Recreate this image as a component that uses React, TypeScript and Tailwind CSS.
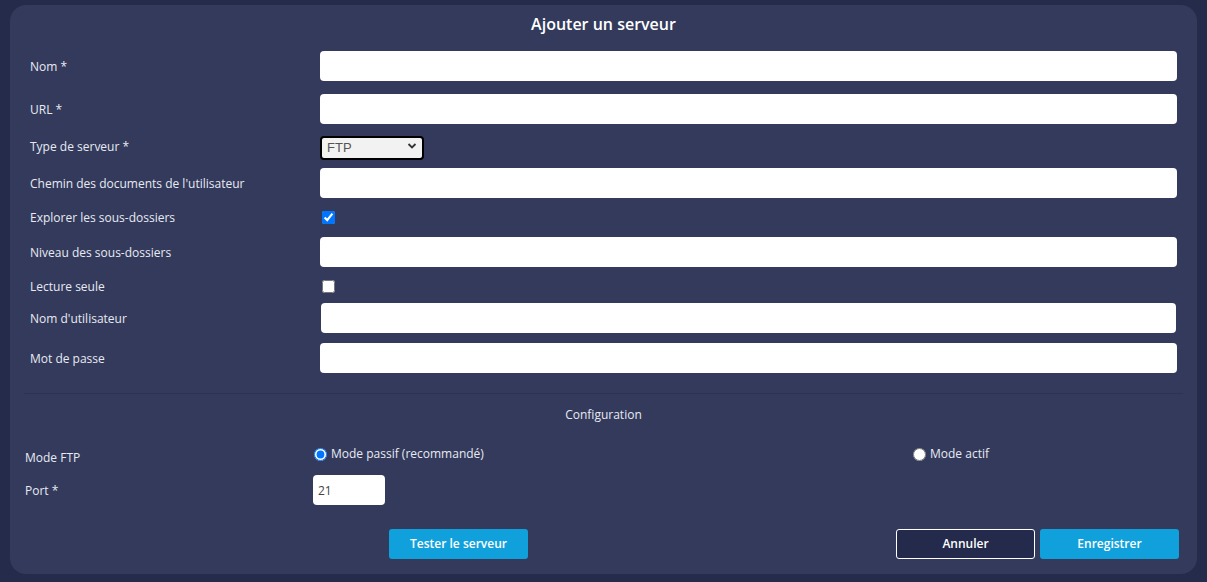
import React from 'react';

const font = { fontFamily: '"Open Sans", "Noto Sans", sans-serif' };

function TextRow({ label, mt, inputClass = '' }: { label: string; mt: string; inputClass?: string }) {
  return (
    <div className={`flex items-center ${mt}`}>
      <label className="w-[290px] shrink-0 pt-[2px] text-[12px] text-[#e8eaf2]">{label}</label>
      <input className={`h-[30px] flex-1 rounded-[4px] bg-white outline-none ${inputClass}`} />
    </div>
  );
}

function CheckRow({ label, mt, checked }: { label: string; mt: string; checked?: boolean }) {
  return (
    <div className={`flex h-[18px] items-center ${mt}`}>
      <label className="w-[290px] shrink-0 pt-[2px] text-[12px] text-[#e8eaf2]">{label}</label>
      <input type="checkbox" defaultChecked={checked} className="ml-[2px] h-[13px] w-[13px]" />
    </div>
  );
}

export default function App() {
  return (
    <div className="min-h-[582px] w-full bg-[#252b4b] px-[10px] pt-[5px] pb-[8px]" style={font}>
      <div className="flex h-[569px] flex-col rounded-[16px] bg-[#333a5c] px-[20px]">
        <h1 className="mt-[8px] text-center text-[16px] leading-[22px] font-semibold text-white">Ajouter un serveur</h1>

        <TextRow label="Nom *" mt="mt-[16px]" />
        <TextRow label="URL *" mt="mt-[13px]" />
        <div className="mt-[10px] flex items-center">
          <label className="w-[290px] shrink-0 pt-[2px] text-[12px] text-[#e8eaf2]">Type de serveur *</label>
          <div className="relative h-[24px] w-[104px]">
            <select
              defaultValue="FTP"
              className="h-full w-full appearance-none rounded-[4px] border-2 border-black bg-[#f2f2f2] pl-[5px] text-[13px] text-[#555] outline-none"
              style={{ fontFamily: '"Liberation Sans", Arial, sans-serif' }}
            >
              <option>FTP</option>
              <option>SFTP</option>
            </select>
            <svg className="pointer-events-none absolute top-[7px] right-[7px] h-[10px] w-[10px]" viewBox="0 0 10 10">
              <path d="M1.5 3 L5 6.5 L8.5 3" fill="none" stroke="#333" strokeWidth="1.8" />
            </svg>
          </div>
        </div>
        <TextRow label="Chemin des documents de l'utilisateur" mt="mt-[10px]" />
        <CheckRow label="Explorer les sous-dossiers" mt="mt-[10px]" checked />
        <TextRow label="Niveau des sous-dossiers" mt="mt-[11px]" />
        <CheckRow label="Lecture seule" mt="mt-[10px]" />
        <TextRow label="Nom d'utilisateur" mt="mt-[8px]" inputClass="ml-[1px] mr-[1px]" />
        <TextRow label="Mot de passe" mt="mt-[10px]" />

        <div className="mx-[-6px] mt-[20px] border-t border-[#2b3252]" />
        <div className="mt-[12px] text-center text-[12px] leading-[18px] text-[#e8eaf2]">Configuration</div>

        <div className="mx-[-5px] mt-[21px] grid grid-cols-[289px_599px_1fr] items-start">
          <span className="pt-[4px] text-[12px] leading-[18px] text-[#e8eaf2]">Mode FTP</span>
          <label className="flex h-[18px] items-center gap-[4px] text-[12px] text-[#e8eaf2]">
            <input type="radio" name="mode" defaultChecked className="m-0 h-[13px] w-[13px]" />
            Mode passif (recommandé)
          </label>
          <label className="flex h-[18px] items-center gap-[4px] text-[12px] text-[#e8eaf2]">
            <input type="radio" name="mode" className="m-0 h-[13px] w-[13px]" />
            Mode actif
          </label>
        </div>

        <div className="mx-[-5px] mt-[8px] flex items-center">
          <span className="w-[288px] shrink-0 pt-[2px] text-[12px] text-[#e8eaf2]">Port *</span>
          <input defaultValue="21" className="h-[30px] w-[72px] rounded-[4px] bg-white pl-[5px] text-[12px] text-[#444] outline-none" />
        </div>

        <div className="mt-[24px] flex items-center">
          <button className="ml-[359px] h-[30px] w-[139px] rounded-[3px] bg-[#10a1dc] text-[12px] font-semibold text-white">Tester le serveur</button>
          <div className="flex-1" />
          <button className="h-[30px] w-[139px] rounded-[3px] border border-white bg-[#232a4b] text-[12px] font-semibold text-white">Annuler</button>
          <button className="mr-[-2px] ml-[5px] h-[30px] w-[139px] rounded-[3px] bg-[#10a1dc] text-[12px] font-semibold text-white">Enregistrer</button>
        </div>
      </div>
    </div>
  );
}
